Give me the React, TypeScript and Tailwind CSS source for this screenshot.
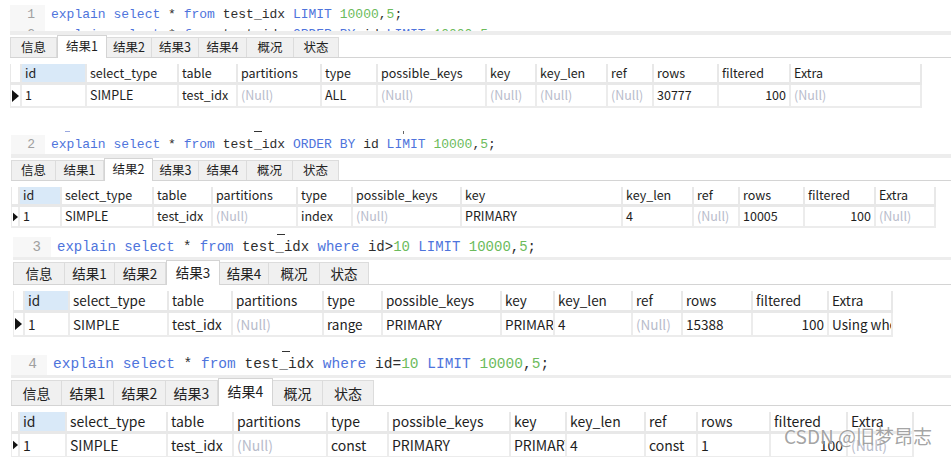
import React from "react";

const KEYWORDS = ["explain", "select", "from", "LIMIT", "ORDER", "BY", "where"];

const HEADERS = ["id", "select_type", "table", "partitions", "type", "possible_keys", "key", "key_len", "ref", "rows", "filtered", "Extra"];

const TABS = ["信息", "结果1", "结果2", "结果3", "结果4", "概况", "状态"];

type Cell = string | null;

interface BlockProps {
  wrap: string;
  marks?: React.ReactNode;
  lineNo: number;
  sql: string;
  codeH: string;
  codeFs: string;
  gutterW: string;
  sepH: string;
  tabsH: string;
  tabW: string[];
  active: number;
  fs: string;
  cols: string;
  headH: string;
  rowH: string;
  values: Cell[];
}

function Sql({ text }: { text: string }) {
  const parts = text.split(/(\w+)/).filter((p) => p !== "");
  return (
    <>
      {parts.map((p, i) => {
        let cls = "text-[#2e2e2e]";
        if (KEYWORDS.includes(p)) cls = "text-[#4e74dc]";
        else if (/^\d+$/.test(p)) cls = "text-[#6cbb5c]";
        return (
          <span key={i} className={cls}>
            {p}
          </span>
        );
      })}
    </>
  );
}

function Arrow() {
  return (
    <svg width="7" height="12" viewBox="0 0 7 12">
      <path d="M0 0 L7 6 L0 12 Z" fill="#111" />
    </svg>
  );
}

function Block(p: BlockProps) {
  return (
    <div className={`flex flex-col ${p.wrap}`}>
      {p.marks}
      {/* editor line */}
      <div className={`flex ${p.codeH} font-['Liberation_Mono',monospace] ${p.codeFs} whitespace-pre`}>
        <div className={`${p.gutterW} bg-[#f7f7f7] text-[#a0a0a0] pr-[10px] flex items-center justify-end`}>{p.lineNo}</div>
        <div className="pl-[6px] flex items-center">
          <Sql text={p.sql} />
        </div>
      </div>
      <div className={`${p.sepH} bg-[#ededed]`} />
      <Tabs h={p.tabsH} widths={p.tabW} active={p.active} fs={p.fs} />
      <Table cols={p.cols} headH={p.headH} rowH={p.rowH} values={p.values} fs={p.fs} />
    </div>
  );
}

function Tabs({ h, widths, active, fs }: { h: string; widths: string[]; active: number; fs: string }) {
  return (
    <div className={`flex items-end ${h} border-b border-[#d4d4d4] ${fs}`}>
      {TABS.map((t, i) =>
        i === active ? (
          <div key={t} className={`${widths[i]} h-[calc(100%+1px)] -mb-px bg-white border-x border-t border-[#d4d4d4] flex items-center justify-center pb-[2px] text-[#1f1f1f]`}>
            {t}
          </div>
        ) : (
          <div key={t} className={`${widths[i]} h-[calc(100%-2px)] bg-[#f0f0f0] border-r border-t border-[#dcdcdc] first:border-l flex items-center justify-center text-[#222]`}>
            {t}
          </div>
        )
      )}
    </div>
  );
}

function Table({ cols, headH, rowH, values, fs }: { cols: string; headH: string; rowH: string; values: Cell[]; fs: string }) {
  return (
    <div className={`mt-[6px] ${fs} text-[#1e1e1e]`}>
      <div className={`grid ${cols} ${headH}`}>
        <div className="border-l border-r-2 border-b-[3px] border-[#e8e8e8]" />
        {HEADERS.map((h, i) => (
          <div
            key={h}
            className={`flex items-center px-[3px] whitespace-nowrap overflow-hidden border-r-2 border-b-[3px] border-[#e8e8e8] ${i === 0 ? "bg-[#d9e9f8]" : "bg-white"}`}
          >
            {h}
          </div>
        ))}
      </div>
      <div className={`grid ${cols} ${rowH}`}>
        <div className="flex items-center pl-[1px] border-l border-r-2 border-b-2 border-[#ececec]">
          <Arrow />
        </div>
        {values.map((v, i) => (
          <div
            key={i}
            className={`flex items-center px-[3px] whitespace-nowrap overflow-hidden border-r-2 border-b-2 border-[#ececec] ${i === 10 ? "justify-end" : ""} ${v === null ? "text-[#b8bccb]" : ""}`}
          >
            {v === null ? "(Null)" : v}
          </div>
        ))}
      </div>
    </div>
  );
}

export default function App() {
  return (
    <div className="relative w-[951px] h-[457px] overflow-hidden bg-white font-['Noto_Sans_CJK_SC',sans-serif]">
      {/* block 1 */}
      <div className="flex flex-col pl-[10px]">
        <div className="h-[31px] overflow-hidden pt-[5px] font-['Liberation_Mono',monospace] text-[13px] whitespace-pre">
          <div className="flex h-[20px]">
            <div className="w-[35px] bg-[#f7f7f7] text-[#a0a0a0] flex items-center justify-end pr-[10px]">1</div>
            <div className="pl-[6px] flex items-center">
              <Sql text="explain select * from test_idx LIMIT 10000,5;" />
            </div>
          </div>
          <div className="flex h-[20px]">
            <div className="w-[35px] bg-[#f7f7f7] text-[#a0a0a0] flex items-center justify-end pr-[10px]">2</div>
            <div className="pl-[6px] flex items-center">
              <Sql text="explain select * from test_idx ORDER BY id LIMIT 10000,5;" />
            </div>
          </div>
        </div>
        <div className="h-[4px] bg-[#ededed]" />
        <Tabs h="h-[23px]" widths={["w-[47px]", "w-[50px]", "w-[45px]", "w-[47px]", "w-[48px]", "w-[47px]", "w-[45px]"]} active={1} fs="text-[12.5px]" />
        <Table
          cols="grid-cols-[12px_65px_92px_59px_84px_56px_109px_50px_71px_46px_65px_72px_131px]"
          headH="h-[21px]"
          rowH="h-[23px]"
          fs="text-[12.5px]"
          values={["1", "SIMPLE", "test_idx", null, "ALL", null, null, null, null, "30777", "100", null]}
        />
      </div>

      <Block
        wrap="mt-[20px] pl-[11px]"
        marks={
          <div className="h-[7px] relative">
            <div className="absolute left-[54px] top-[3px] w-[5px] h-px bg-[#9aa8e0]" />
            <div className="absolute left-[243px] top-[3px] w-[8px] h-px bg-[#333]" />
            <div className="absolute left-[392px] top-[3px] w-px h-[3px] bg-[#666]" />
          </div>
        }
        lineNo={2}
        sql="explain select * from test_idx ORDER BY id LIMIT 10000,5;"
        codeH="h-[19px]"
        codeFs="text-[13px]"
        gutterW="w-[34px]"
        sepH="h-[4px]"
        tabsH="h-[23px]"
        tabW={["w-[45px]", "w-[48px]", "w-[49px]", "w-[46px]", "w-[48px]", "w-[46px]", "w-[46px]"]}
        active={2}
        fs="text-[12.5px]"
        cols="grid-cols-[9px_42px_92px_59px_85px_55px_109px_161px_71px_46px_65px_71px_60px]"
        headH="h-[20px]"
        rowH="h-[21px]"
        values={["1", "SIMPLE", "test_idx", null, "index", null, "PRIMARY", "4", null, "10005", "100", null]}
      />

      <Block
        wrap="pl-[13px]"
        marks={
          <div className="h-[9px] relative">
            <div className="absolute left-[264px] top-[6px] w-[8px] h-px bg-[#333]" />
          </div>
        }
        lineNo={3}
        sql="explain select * from test_idx where id>10 LIMIT 10000,5;"
        codeH="h-[20px]"
        codeFs="text-[14px]"
        gutterW="w-[38px]"
        sepH="h-[3px]"
        tabsH="h-[25px]"
        tabW={["w-[52px]", "w-[50px]", "w-[51px]", "w-[54px]", "w-[49px]", "w-[51px]", "w-[49px]"]}
        active={3}
        fs="text-[13.5px]"
        cols="grid-cols-[12px_45px_99px_64px_91px_59px_119px_53px_78px_50px_70px_76px_64px]"
        headH="h-[22px]"
        rowH="h-[24px]"
        values={["1", "SIMPLE", "test_idx", null, "range", "PRIMARY", "PRIMARY", "4", null, "15388", "100", "Using where"]}
      />

      <Block
        wrap="mt-[8px] pl-[11px]"
        marks={
          <div className="h-[10px] relative">
            <div className="absolute left-[271px] top-[6px] w-[8px] h-px bg-[#333]" />
          </div>
        }
        lineNo={4}
        sql="explain select * from test_idx where id=10 LIMIT 10000,5;"
        codeH="h-[20px]"
        codeFs="text-[14.5px]"
        gutterW="w-[36px]"
        sepH="h-[3px]"
        tabsH="h-[28px]"
        tabW={["w-[51px]", "w-[52px]", "w-[52px]", "w-[52px]", "w-[55px]", "w-[50px]", "w-[51px]"]}
        active={4}
        fs="text-[14px]"
        cols="grid-cols-[9px_47px_101px_66px_94px_61px_122px_56px_79px_52px_73px_77px_66px]"
        headH="h-[22px]"
        rowH="h-[24px]"
        values={["1", "SIMPLE", "test_idx", null, "const", "PRIMARY", "PRIMARY", "4", "const", "1", "100", null]}
      />

      <div className="absolute left-[784px] top-[423px] text-[19px] leading-[26px] text-[#8c8c8c]/80 [text-shadow:0_0_2px_#fff] font-['Noto_Sans_CJK_SC',sans-serif]">
        CSDN @旧梦昂志
      </div>
    </div>
  );
}
